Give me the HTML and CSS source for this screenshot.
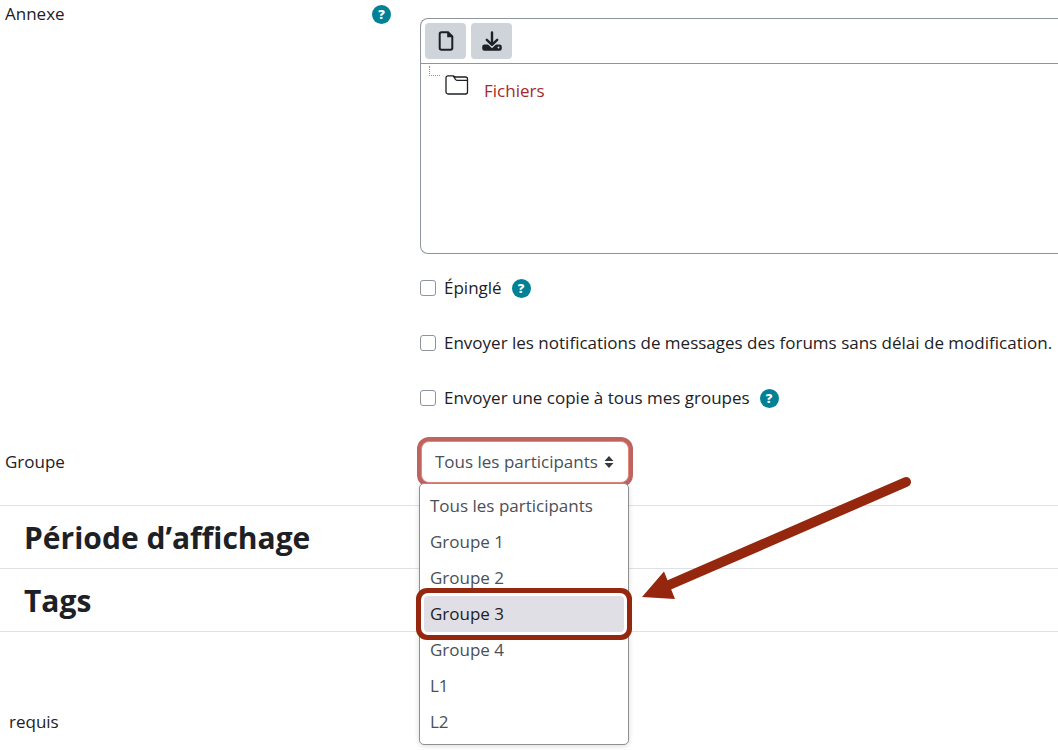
FILE: index.html
```html
<!DOCTYPE html>
<html lang="fr">
<head>
  <meta charset="UTF-8">
  <meta name="viewport" content="width=device-width, initial-scale=1.0">
  <title>Forum</title>
  <link rel="stylesheet" href="styles.css">
</head>
<body>
  <form class="forum-form">
    <div class="form-row">
      <div class="form-label">
        <span id="annexe">Annexe</span>
        <button type="button" class="help" aria-label="Aide sur Annexe">?</button>
      </div>
      <div class="file-manager" role="group" aria-labelledby="annexe">
        <div class="toolbar">
          <button type="button" class="tool" aria-label="Ajouter">
            <svg width="16" height="20" viewBox="0 0 16 20">
              <path d="M3.5 1.2H10L14.3 5.5V17a1.8 1.8 0 0 1-1.8 1.8h-9A1.8 1.8 0 0 1 1.7 17V3a1.8 1.8 0 0 1 1.8-1.8z" fill="none" stroke="#1d2125" stroke-width="2"/>
              <path d="M9.200 1v5.300h5.300z" fill="#1d2125"/>
            </svg>
          </button>
          <button type="button" class="tool" aria-label="Tout télécharger">
            <svg width="20" height="20" viewBox="0 0 20 20">
              <path d="M2.5 13.500h15a2.300 2.300 0 0 1 2.300 2.300v1.600a2.300 2.300 0 0 1-2.300 2.300h-15a2.300 2.300 0 0 1-2.300-2.300v-1.600a2.300 2.300 0 0 1 2.300-2.300z" fill="#1d2125"/>
              <path d="M4.800 9.600L10 14.600l5.200-5" fill="none" stroke="#ced4da" stroke-width="4"/>
              <path d="M10 1.500v12M4.800 8.800L10 13.800l5.200-5" fill="none" stroke="#1d2125" stroke-width="2.400" stroke-linecap="round" stroke-linejoin="round"/>
              <circle cx="16.500" cy="16.600" r="1" fill="#ced4da"/>
            </svg>
          </button>
        </div>
        <div class="tree">
          <span class="branch"></span>
          <svg class="folder" width="24" height="20" viewBox="0 0 24 20">
            <path d="M3 .8h5.200l2.300 3.700c.3.500.8.800 1.500.8h10.500V17a2 2 0 0 1-2 2H3a2 2 0 0 1-2-2V2.800a2 2 0 0 1 2-2zM8.200.8c1 .9 1.500 1.100 2.800 1.200h9.500a2 2 0 0 1 2 2v1.500" fill="none" stroke="#1d2125" stroke-width="1.300"/>
          </svg>
          <a href="#">Fichiers</a>
        </div>
      </div>
    </div>

    <div class="checks">
      <div class="check">
        <input type="checkbox" id="pinned">
        <label for="pinned">Épinglé</label>
        <button type="button" class="help" aria-label="Aide sur Épinglé">?</button>
      </div>
      <div class="check">
        <input type="checkbox" id="mailnow">
        <label for="mailnow">Envoyer les notifications de messages des forums sans délai de modification.</label>
      </div>
      <div class="check">
        <input type="checkbox" id="allgroups">
        <label for="allgroups">Envoyer une copie à tous mes groupes</label>
        <button type="button" class="help" aria-label="Aide sur les groupes">?</button>
      </div>
    </div>

    <div class="form-row group-row">
      <label class="form-label" for="group">Groupe</label>
      <div class="group-field">
        <select id="group" class="group-select">
          <option>Tous les participants</option>
          <option>Groupe 1</option>
          <option>Groupe 2</option>
          <option>Groupe 3</option>
          <option>Groupe 4</option>
          <option>L1</option>
          <option>L2</option>
        </select>
        <svg class="caret" width="10" height="12" viewBox="0 0 10 12">
          <path d="M5 0l4.500 5h-9zM5 12L.5 7h9z" fill="#343a40"/>
        </svg>
        <ul class="menu" role="listbox" aria-label="Groupe">
          <li role="option">Tous les participants</li>
          <li role="option">Groupe 1</li>
          <li role="option">Groupe 2</li>
          <li role="option" class="active" aria-selected="true">Groupe 3</li>
          <li role="option">Groupe 4</li>
          <li role="option">L1</li>
          <li role="option">L2</li>
        </ul>
        <svg class="arrow" width="272" height="126" viewBox="0 0 272 126">
          <path d="M265 6L28 109" stroke="#94270e" stroke-width="10" stroke-linecap="round"/>
          <path d="M1 121l22-25.500L34 123z" fill="#94270e"/>
        </svg>
      </div>
    </div>

    <section class="panel"><h2>Période d’affichage</h2></section>
    <section class="panel"><h2>Tags</h2></section>
    <p class="required">requis</p>
  </form>
</body>
</html>
```

FILE: styles.css
```css
* {
  box-sizing: border-box;
}
body {
  margin: 0;
  min-height: 100vh;
  font-family: "Open Sans", "Noto Sans", sans-serif;
  font-size: 17px;
  line-height: 28px;
  color: #1d2125;
  background: #fff;
}
button {
  padding: 0;
  border: none;
  font-family: inherit;
  cursor: pointer;
}
.form-row {
  display: grid;
  grid-template-columns: 386px 1fr;
  column-gap: 29px;
  padding-left: 5px;
}
.form-label {
  display: flex;
  justify-content: space-between;
  align-self: start;
}
.help {
  width: 19px;
  height: 19px;
  align-self: center;
  border-radius: 50%;
  background: #008196;
  color: #fff;
  font-size: 13px;
  font-weight: 800;
  line-height: 19px;
}

/* file manager */
.file-manager {
  height: 236px;
  margin-top: 18px;
  border: 1px solid #8f959e;
  border-right: none;
  border-radius: 8px 0 0 8px;
}
.toolbar {
  display: flex;
  gap: 5px;
  padding: 4px;
  border-bottom: 1px solid #8f959e;
}
.tool {
  display: flex;
  align-items: center;
  justify-content: center;
  width: 41px;
  height: 36px;
  border-radius: 4px;
  background: #ced4da;
}
.tree {
  display: flex;
  padding: 2px 8px;
}
.branch {
  width: 11px;
  height: 10px;
  border: 1px dotted #8f959e;
  border-width: 0 0 1px 1px;
}
.folder {
  margin: 9px 15px 0 5px;
}
.tree a {
  margin-top: 11px;
  color: #a52a2a;
  text-decoration: none;
}

.checks {
  display: grid;
  gap: 27px;
  margin: 20px 0 28px;
  padding-left: 420px;
}
.check {
  display: flex;
  align-items: center;
  white-space: nowrap;
}
.check input {
  appearance: none;
  width: 16px;
  height: 16px;
  margin: 0 8px 0 0;
  border: 1px solid #8f959e;
  border-radius: 3px;
}
.check .help {
  margin-left: 10px;
}

/* group selector */
.group-row {
  align-items: center;
  margin-bottom: 21px;
}
.group-row .form-label {
  align-self: center;
}
.group-field {
  position: relative;
  height: 44px;
  padding: 1px;
}
.group-select {
  appearance: none;
  display: block;
  width: 208px;
  height: 42px;
  padding: 0 13px;
  border: 1px solid #e08a80;
  border-radius: 8px;
  box-shadow: 0 0 0 4px #be6360;
  background: #fff;
  color: #495057;
  font: inherit;
}
.caret {
  position: absolute;
  top: 16px;
  left: 184px;
  pointer-events: none;
}
.menu {
  position: absolute;
  top: 43px;
  left: -1px;
  z-index: 1;
  width: 210px;
  margin: 0;
  padding: 4px;
  list-style: none;
  border: 1px solid #8f8f8f;
  border-radius: 5px;
  background: #fff;
  box-shadow: 0 1px 5px rgba(0, 0, 0, 0.15);
  color: #495057;
}
.menu li {
  padding: 4px 6px;
}
.menu .active {
  position: relative;
  border-radius: 4px;
  background: #e0dfe5;
  color: #1d1d25;
  box-shadow: 0 0 0 3px #fff, 0 0 0 8px #94270e;
}
.arrow {
  position: absolute;
  top: 36px;
  left: 221px;
  pointer-events: none;
}

.panel {
  padding: 12px 24px 10px;
  border-top: 1px solid #dee2e6;
}
.panel h2 {
  margin: 0;
  font-size: 30px;
  line-height: 40px;
}
.required {
  margin: 0;
  padding: 76px 9px 0;
  border-top: 1px solid #dee2e6;
}
```
